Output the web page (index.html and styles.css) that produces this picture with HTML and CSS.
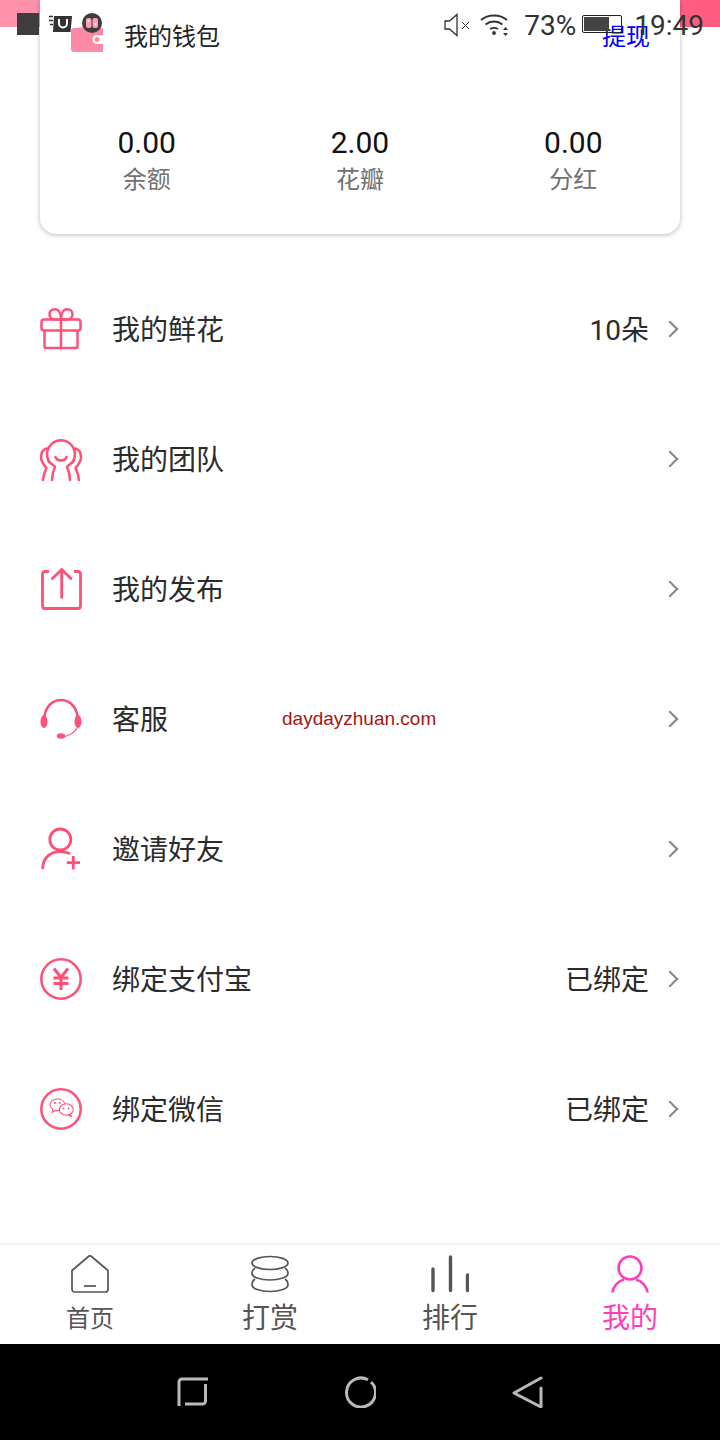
FILE: index.html
```html
<!DOCTYPE html>
<html lang="zh">
<head>
<meta charset="utf-8">
<title>我的</title>
<link rel="stylesheet" href="styles.css">
</head>
<body>
<div class="page">
  <div class="hero"></div>
  <main class="content">
    <section class="wallet">
      <div class="wallet-head">
        <svg class="wallet-icon" width="32" height="30" viewBox="0 0 32 30"><path d="M3 7 L22 1 L24 6 Z" fill="#ffb4c6"/><path d="M0 9a3 3 0 0 1 3-3h29v7h-6a4.500 4.500 0 0 0 0 9h6v8H3a3 3 0 0 1-3-3z" fill="#ff8aa5"/><circle cx="26" cy="17.500" r="2.500" fill="#ff8aa5"/></svg>
        <span class="wallet-title">我的钱包</span>
        <span class="wallet-action">提现</span>
      </div>
      <div class="stats">
        <div class="stat"><span class="stat-value">0.00</span><span class="stat-label">余额</span></div>
        <div class="stat"><span class="stat-value">2.00</span><span class="stat-label">花瓣</span></div>
        <div class="stat"><span class="stat-value">0.00</span><span class="stat-label">分红</span></div>
      </div>
    </section>
    <ul class="menu">
      <li class="row">
        <svg class="row-icon" viewBox="0 0 42 42" fill="none" stroke="#ff5078" stroke-width="2.500" stroke-linejoin="round"><rect x="1.500" y="11.500" width="39" height="11" rx="2.500"/><path d="M4.500 22.500V38.500a1.500 1.500 0 0 0 1.500 1.500h30a1.500 1.500 0 0 0 1.500-1.500V22.500M21 11.500V40M21 11.500h-6c-3.500 0-5.500-2.500-5.500-5.200S11.700 1.200 14.800 1.200C18.500 1.200 21 5 21 11.500c0-6.500 2.500-10.300 6.200-10.300 3.100 0 5.300 2.400 5.300 5.100s-2 5.200-5.500 5.200z"/></svg>
        <span class="row-label">我的鲜花</span><span class="row-value">10朵</span><i class="chev"></i>
      </li>
      <li class="row">
        <svg class="row-icon" viewBox="0 0 42 42" fill="none" stroke="#ff5078" stroke-width="2.500" stroke-linecap="round"><path d="M9 23.500A14 14 0 1 1 33 23.500"/><path d="M15.500 19c1.500 4.500 9.500 4.500 11 0"/><path d="M8.500 23c1.500 2.500 5.500 4 6.500 6-2 4-3 8-3 13M33.500 23c-1.500 2.500-5.500 4-6.500 6 2 4 3 8 3 13"/><path d="M6.500 10.500C2 12 1 16 1 19c0 5 3 8 5.500 11-1.500 3-3 7-3.500 12M35.500 10.500C40 12 41 16 41 19c0 5-3 8-5.500 11 1.500 3 3 7 3.500 12"/></svg>
        <span class="row-label">我的团队</span><i class="chev"></i>
      </li>
      <li class="row">
        <svg class="row-icon" viewBox="0 0 42 42" fill="none" stroke="#ff5078" stroke-width="2.800" stroke-linecap="round" stroke-linejoin="round"><path d="M8 3.500H5A2.800 2.800 0 0 0 2.500 6v32A2.800 2.800 0 0 0 5 40.500h33a2.800 2.800 0 0 0 2.500-2.500V6A2.800 2.800 0 0 0 38 3.500h-3"/><path d="M21.700 29.500V1.500M12.500 10.500l9.200-9 9.200 9"/></svg>
        <span class="row-label">我的发布</span><i class="chev"></i>
      </li>
      <li class="row">
        <svg class="row-icon" viewBox="0 0 42 42" fill="none" stroke="#ff5078" stroke-width="2.500"><path d="M4.500 18C6 8 13 2 21 2s15 6 16.500 16"/><ellipse cx="4" cy="23.500" rx="3.500" ry="6.500" fill="#ff5078" stroke="none"/><ellipse cx="38" cy="23.500" rx="3.500" ry="6.500" fill="#ff5078" stroke="none"/><path d="M37 30c-2 4-7 7-12 8.500" stroke-width="1.300"/><ellipse cx="21" cy="38" rx="4.300" ry="2.800" fill="#ff5078" stroke="none"/></svg>
        <span class="row-label">客服</span><span class="watermark">daydayzhuan.com</span><i class="chev"></i>
      </li>
      <li class="row">
        <svg class="row-icon" viewBox="0 0 42 42" fill="none" stroke="#ff5078" stroke-width="2.800" stroke-linecap="round"><circle cx="20.300" cy="11.500" r="10.500"/><path d="M2.700 40C3 30 10 23.700 20 23.700c3.500 0 6.500.6 9 1.600"/><path d="M26.700 34.700H40M33.300 28v13.300" stroke-linecap="butt"/></svg>
        <span class="row-label">邀请好友</span><i class="chev"></i>
      </li>
      <li class="row">
        <svg class="row-icon" viewBox="0 0 42 42" fill="none" stroke="#ff5078" stroke-width="2.500"><circle cx="21" cy="21" r="19.700"/><path d="M14 10.500l7 9 7-9M13.500 20h15M13.500 25.500h15M21 19v13" stroke-width="3"/></svg>
        <span class="row-label">绑定支付宝</span><span class="row-value">已绑定</span><i class="chev"></i>
      </li>
      <li class="row">
        <svg class="row-icon" viewBox="0 0 42 42" fill="none" stroke="#ff5078" stroke-width="2.500"><circle cx="21" cy="21" r="19.700"/><path d="M19 22.500c-1.200.2-2.500.2-3.800 0l-3 1.800.7-3C11 20 10 18.500 10 16.800c0-3.300 3.300-5.800 7.500-5.800 3.600 0 6.700 2 7.300 4.700" stroke-width="1.100"/><ellipse cx="26.300" cy="21.500" rx="7" ry="5.700" stroke-width="1.100"/><path d="M30 26l1.500 2.500-3.800-1.300" stroke-width="1.100"/><circle cx="15" cy="15" r="1" fill="#ff5078" stroke="none"/><circle cx="20" cy="15" r="1" fill="#ff5078" stroke="none"/><circle cx="23.500" cy="20.500" r=".9" fill="#ff5078" stroke="none"/><circle cx="28.500" cy="20.500" r=".9" fill="#ff5078" stroke="none"/></svg>
        <span class="row-label">绑定微信</span><span class="row-value">已绑定</span><i class="chev"></i>
      </li>
    </ul>
  </main>
  <nav class="tabs">
    <div class="tab">
      <svg class="tab-icon" viewBox="0 0 38 38" fill="none" stroke="#555" stroke-width="1.700" stroke-linejoin="round"><path d="M1 15.500 17.500 1.500a2.300 2.300 0 0 1 3 0L37 15.500V34.500a2.500 2.500 0 0 1-2.500 2.500h-31A2.500 2.500 0 0 1 1 34.500z"/><path d="M13 31h12"/></svg>
      <span class="tab-label small">首页</span>
    </div>
    <div class="tab">
      <svg class="tab-icon" viewBox="0 0 38 38" fill="none" stroke="#555" stroke-width="1.700"><ellipse cx="19" cy="8" rx="18" ry="6.500"/><path d="M4 13C1.500 14.500 1 16.500 1 18.500c0 3.500 8 6.500 18 6.500s18-3 18-6.500c0-2-.5-4-3-5.500M4 24C1.500 25.500 1 27.500 1 30c0 3.500 8 6.500 18 6.500S37 33.500 37 30c0-2.500-.5-4.500-3-6"/></svg>
      <span class="tab-label">打赏</span>
    </div>
    <div class="tab">
      <svg class="tab-icon" viewBox="0 0 38 38" fill="none" stroke="#555" stroke-width="3.400" stroke-linecap="round"><path d="M2 14v21.500M19.500 2v33.500M36.500 20v15.500"/></svg>
      <span class="tab-label">排行</span>
    </div>
    <div class="tab active">
      <svg class="tab-icon" viewBox="0 0 38 38" fill="none" stroke="#ff3dbb" stroke-width="2.600"><circle cx="19" cy="13" r="11.500"/><path d="M1.500 37.500C2 31.500 7 26 13 24.500M36.500 37.500C36 31.500 31 26 25 24.500"/></svg>
      <span class="tab-label">我的</span>
    </div>
  </nav>
  <div class="sysnav">
    <svg width="32" height="32" viewBox="0 0 32 32" fill="none" stroke="#b9b9b9" stroke-width="3"><path d="M3 30V6a3 3 0 0 1 3-3h26M29.500 8v17a3 3 0 0 1-3 3H9"/></svg>
    <svg width="32" height="32" viewBox="0 0 32 32" fill="none" stroke="#b9b9b9" stroke-width="3"><path d="M24 3.800A14.500 14.500 0 1 0 27 6"/></svg>
    <svg width="32" height="32" viewBox="0 0 32 32" fill="none" stroke="#b9b9b9" stroke-width="3" stroke-linecap="round" stroke-linejoin="round"><path d="M29 2 2 17l27 14V12"/></svg>
  </div>
  <div class="statusbar">
    <div class="status-left">
      <span class="status-square"></span>
      <svg class="status-mag" width="23" height="17" viewBox="0 0 23 17"><path d="M0 1.500h4M0 5.500h4M1 9.500h3" stroke="#333" stroke-width="1.600"/><path d="M5 1h18l-1.500 16H4z" fill="#333"/><path d="M10 4v4.500a4 4 0 0 0 8 0V4" fill="none" stroke="#fff" stroke-width="2"/></svg>
      <svg class="status-badge" width="20" height="20" viewBox="0 0 20 20"><circle cx="10" cy="10" r="10" fill="#3d3d3d"/><rect x="4" y="5" width="5.500" height="10" rx="2" fill="#ff9db3"/><rect x="10.500" y="5" width="5.500" height="10" rx="2" fill="#ff9db3"/><circle cx="6.500" cy="8" r="1" fill="#fff"/><circle cx="13.500" cy="11" r="1" fill="#fff"/></svg>
    </div>
    <div class="status-right">
      <svg class="status-sound" width="28" height="24" viewBox="0 0 28 24" fill="none" stroke="#333" stroke-width="1.300"><path d="M1 8h4.500L13 1.500v21L5.500 16H1z"/><path d="M18 9l7 7M25 9l-7 7" stroke-width="1"/></svg>
      <svg class="status-wifi" width="30" height="24" viewBox="0 0 30 24" fill="none" stroke="#333" stroke-width="1.800"><path d="M1 7c7-6 19-6 26 0M5.500 11.500c5-4 12-4 17 0M10 16c2.500-1.500 5.500-1.500 8 0"/><circle cx="14" cy="20" r="1.900" fill="#333" stroke="none"/><path d="M23 17l2.500-3 2.500 3zM23 20l2.500 3 2.500-3z" fill="#333" stroke="none"/></svg>
      <span class="status-pct">73%</span>
      <span class="battery"><span class="battery-fill"></span></span>
      <span class="status-time">19:49</span>
    </div>
  </div>
</div>
</body>
</html>
```

FILE: styles.css
```css
* { box-sizing: border-box; }
html, body { margin: 0; padding: 0; background: #fff; }
body { font-family: "Roboto", "Noto Sans CJK SC", sans-serif; }
ul { list-style: none; margin: 0; padding: 0; }
.page { position: relative; width: 720px; height: 1440px; overflow: hidden; background: #fff; display: flex; flex-direction: column; }
.hero { position: absolute; left: 0; top: 0; width: 720px; height: 27px; background: linear-gradient(90deg, #ff93ab, #ff5a80); }
.content { position: relative; flex: 1; min-height: 0; padding: 0 40px; }
.wallet { height: 234px; background: #fff; border-radius: 0 0 16px 16px; box-shadow: 0 1px 5px rgba(0,0,0,.28); display: flex; flex-direction: column; }
.wallet-head { height: 128px; padding: 22px 30px 0 31px; display: flex; align-items: flex-start; }
.wallet-icon { margin-right: 21px; }
.wallet-title { font-size: 24px; line-height: 30px; color: #222; flex: 1; }
.wallet-action { font-size: 24px; line-height: 30px; color: #0000ff; }
.stats { display: flex; }
.stat { flex: 1; display: flex; flex-direction: column; align-items: center; }
.stat-value { font-size: 30px; line-height: 30px; color: #111; }
.stat-label { font-size: 24px; line-height: 36px; color: #707070; margin-top: 4px; }
.menu { margin: 31px -40px 0; padding: 0 40px; }
.row { height: 130px; display: flex; align-items: center; }
.row-icon { width: 42px; height: 42px; flex: none; margin: 0 30px 2px 0; overflow: visible; }
.row-label { font-size: 28px; color: #2b2b2b; flex: 1; padding-bottom: 4px; }
.row-value { font-size: 28px; color: #2b2b2b; margin-right: 15px; padding-bottom: 4px; }
.chev { width: 12px; height: 12px; border-top: 2px solid #888; border-right: 2px solid #888; transform: rotate(45deg); margin: 0 4px 2px 0; flex: none; }
.watermark { position: absolute; left: 282px; font-family: "Liberation Sans", sans-serif; font-size: 19px; color: #a81414; padding-bottom: 3px; }
.tabs { flex: none; height: 101px; border-top: 2px solid #f2f2f2; background: #fff; display: flex; }
.tab { flex: 1; display: flex; flex-direction: column; align-items: center; padding-top: 10px; }
.tab-icon { width: 38px; height: 38px; flex: none; }
.tab-label { font-size: 28px; line-height: 32px; color: #555; margin-top: 10px; }
.tab-label.small { font-size: 24px; }
.tab.active .tab-label { color: #ff3dbb; }
.sysnav { flex: none; height: 96px; padding-right: 1px; background: #000; display: flex; align-items: center; justify-content: center; gap: 136px; }
.statusbar { position: absolute; left: 0; top: 0; width: 720px; height: 50px; padding: 10px 16px 0 17px; display: flex; justify-content: space-between; align-items: flex-start; }
.status-left { display: flex; align-items: flex-start; gap: 10px; padding-top: 3px; }
.status-square { width: 22px; height: 22px; background: #3d3d3d; }
.status-mag { margin-top: 2px; }
.status-badge { margin-left: 0; }
.status-right { display: flex; align-items: center; height: 30px; }
.status-sound { margin-right: 8px; }
.status-pct { font-size: 28px; color: #333; margin: 0 6px 0 14px; }
.battery { width: 40px; height: 18px; border: 1.500px solid #222; border-radius: 2px; padding: 1px; display: block; margin: -2px 12px 0 0; }
.battery-fill { display: block; height: 100%; width: 70%; background: #444; }
.status-time { font-size: 28px; color: #333; }
```
